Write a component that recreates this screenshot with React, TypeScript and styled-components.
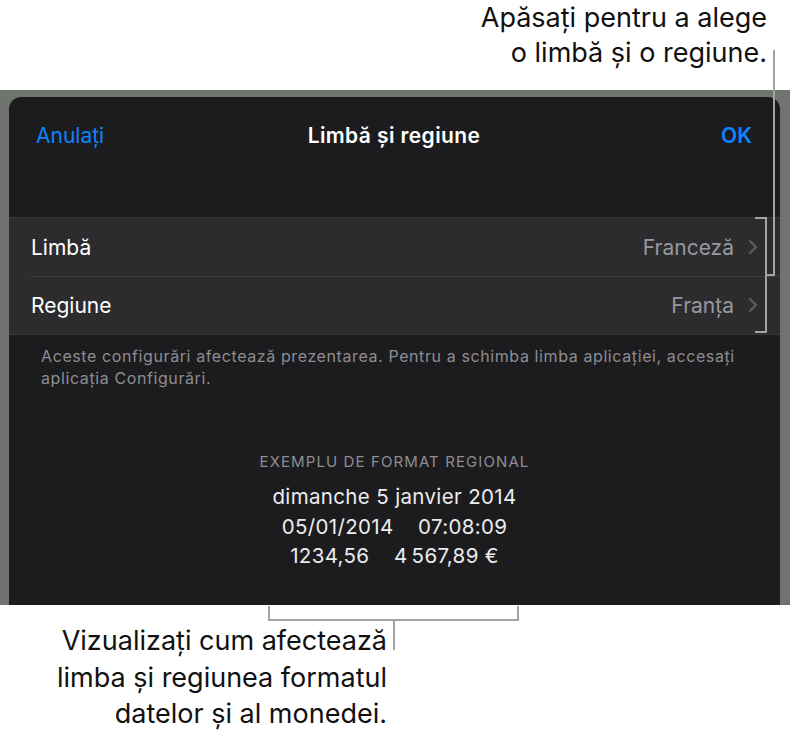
import React from 'react';
import styled, { createGlobalStyle } from 'styled-components';

const GlobalStyle = createGlobalStyle`
  html, body {
    margin: 0;
    padding: 0;
    background: #ffffff;
  }
  body {
    font-family: Inter, "Liberation Sans", Arial, sans-serif;
    -webkit-font-smoothing: antialiased;
  }
`;

// Page and callouts
const Page = styled.div`
  position: relative;
  width: 790px;
  height: 739px;
  overflow: hidden;
  background: #ffffff;
`;

const Callout = styled.div<{ width?: number }>`
  font-size: 27px;
  line-height: 35px;
  color: #111111;
  text-align: right;
  width: ${p => (p.width ? `${p.width}px` : 'auto')};
`;

const TopCallout = styled(Callout)`
  height: 90px;
  padding-right: 23px;
  box-sizing: border-box;
`;

const BottomCallout = styled(Callout)`
  margin-top: 18px;
  line-height: 36.5px;
`;

const Leaders = styled.svg`
  position: absolute;
  top: 0;
  left: 0;
  pointer-events: none;
`;

// Screenshot of the dialog
const Screenshot = styled.div`
  height: 515px;
  padding: 7px 10px 0 9px;
  box-sizing: border-box;
  background: #70746f;
  overflow: hidden;
`;

const Dialog = styled.div`
  height: 100%;
  background: #1c1c1e;
  border-radius: 12px 12px 0 0;
  display: flex;
  flex-direction: column;
`;

const Header = styled.div`
  height: 76px;
  padding: 0 28px 0 27px;
  display: grid;
  grid-template-columns: 1fr auto 1fr;
  align-items: center;
`;

const HeaderButton = styled.span<{ bold?: boolean; align?: 'left' | 'right' }>`
  color: #0a84ff;
  font-size: 21px;
  font-weight: ${p => (p.bold ? 600 : 400)};
  text-align: ${p => p.align || 'left'};
`;

const Title = styled.span`
  color: #ffffff;
  font-size: 21px;
  font-weight: 600;
  letter-spacing: 0.4px;
`;

const Group = styled.div`
  margin-top: 44px;
  background: #2c2c2e;
  border-top: 1px solid #38383a;
  border-bottom: 1px solid #38383a;
`;

const Row = styled.div<{ divided?: boolean }>`
  position: relative;
  height: 58px;
  padding: 0 22px;
  display: flex;
  align-items: center;
  font-size: 21px;

  &::before {
    content: '';
    display: ${p => (p.divided ? 'block' : 'none')};
    position: absolute;
    top: 0;
    left: 21px;
    right: 0;
    border-top: 1px solid #3d3d40;
  }
`;

const RowLabel = styled.span`
  color: #ffffff;
  flex: 1;
`;

const RowValue = styled.span`
  color: #98989e;
  margin-right: 14px;
`;

const Footnote = styled.p`
  margin: 10px 0 0;
  padding: 0 32px;
  font-size: 16px;
  line-height: 22px;
  letter-spacing: 0.6px;
  color: #8d8d93;
`;

const Example = styled.div`
  margin-top: 63px;
  display: flex;
  flex-direction: column;
  align-items: center;
`;

const ExampleTitle = styled.div`
  font-size: 15px;
  line-height: 20px;
  letter-spacing: 1.1px;
  color: #8d8d93;
  text-transform: uppercase;
`;

const ExampleLines = styled.div`
  margin-top: 10px;
  font-size: 20.5px;
  line-height: 29.5px;
  letter-spacing: 0.35px;
  color: #ececee;
  text-align: center;
  white-space: pre;
`;

const Chevron = () => (
  <svg width="10" height="16" viewBox="0 0 10 16">
    <polyline points="2,2 8,8 2,14" fill="none" stroke="#5c5c61" strokeWidth="2.2" strokeLinecap="round" strokeLinejoin="round" />
  </svg>
);

const LINE = '#a3a3a3';

const App: React.FC = () => (
  <Page>
    <GlobalStyle />
    <TopCallout>
      Apăsați pentru a alege
      <br />
      o limbă și o regiune.
    </TopCallout>

    <Screenshot>
      <Dialog>
        <Header>
          <HeaderButton>Anulați</HeaderButton>
          <Title>Limbă și regiune</Title>
          <HeaderButton bold align="right">OK</HeaderButton>
        </Header>

        <Group>
          <Row>
            <RowLabel>Limbă</RowLabel>
            <RowValue>Franceză</RowValue>
            <Chevron />
          </Row>
          <Row divided>
            <RowLabel>Regiune</RowLabel>
            <RowValue>Franța</RowValue>
            <Chevron />
          </Row>
        </Group>

        <Footnote>
          Aceste configurări afectează prezentarea. Pentru a schimba limba aplicației, accesați aplicația Configurări.
        </Footnote>

        <Example>
          <ExampleTitle>Exemplu de format regional</ExampleTitle>
          <ExampleLines>
            {'dimanche 5 janvier 2014\n05/01/2014    07:08:09\n1234,56    4\u202F567,89 €'}
          </ExampleLines>
        </Example>
      </Dialog>
    </Screenshot>

    <BottomCallout width={387}>
      Vizualizați cum afectează
      <br />
      limba și regiunea formatul
      <br />
      datelor și al monedei.
    </BottomCallout>

    <Leaders width="790" height="739" viewBox="0 0 790 739">
      <polyline points="755,218 766,218 766,332 755,332" fill="none" stroke={LINE} strokeWidth="2" />
      <polyline points="766,275 774,275 774,50" fill="none" stroke={LINE} strokeWidth="2" />
      <polyline points="269,606 269,620 518,620 518,606" fill="none" stroke={LINE} strokeWidth="2" />
      <line x1="394" y1="620" x2="394" y2="650" stroke={LINE} strokeWidth="2" />
    </Leaders>
  </Page>
);

export default App;
